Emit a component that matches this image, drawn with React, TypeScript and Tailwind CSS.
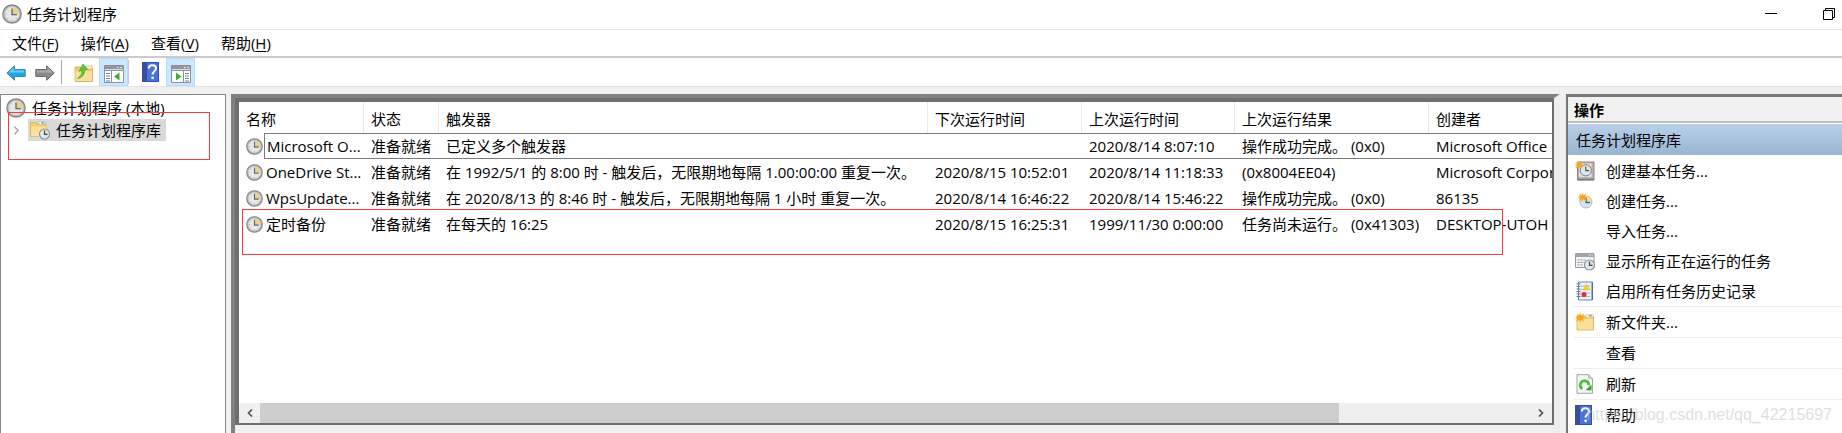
import cn from "clsx";
import type { ReactNode } from "react";

type IconProps = {
    className?: string;
};

type Task = {
    name: string;
    status: string;
    trigger: string;
    nextRun: string;
    lastRun: string;
    result: string;
    author: string;
};

type Action = {
    label: string;
    icon?: ReactNode;
    separated?: boolean;
};

function ClockIcon({ className }: IconProps) {
    return (
        <svg viewBox="0 0 20 20" className={cn("shrink-0", className)} aria-hidden="true">
            <circle cx="10" cy="10" r="9.2" fill="#b4b2b0" stroke="#858585" strokeWidth="1.2" />
            <circle cx="10" cy="10" r="7.2" fill="#e6e8ea" stroke="#d2d2d2" strokeWidth="0.8" />
            <path d="M10 10.5V3.200A6.800 6.800 0 0 1 16.800 10.500z" fill="#ecd08a" />
            <path d="M10 4.500v6.200h4.800" fill="none" stroke="#5c6673" strokeWidth="1.300" />
            <path
                d="M10 15.300v1.200M3.600 10h1.200M5.500 5.500l.8.8M5.500 14.500l.8-.8M14.500 14.500l-.8-.8"
                stroke="#9aa0a8"
                strokeWidth="0.8"
            />
        </svg>
    );
}

function SmallClock() {
    return (
        <g>
            <circle cx="14.5" cy="14" r="5" fill="#dce9f0" stroke="#84929c" strokeWidth="1.1" />
            <path d="M14.5 14V9.7A4.3 4.3 0 0 1 18.8 14z" fill="#f2dda0" />
            <path d="M14.5 10.6V14.4h3" fill="none" stroke="#37495a" strokeWidth="1.2" />
        </g>
    );
}

function Spark() {
    return (
        <path
            d="M6 0l1.2 3L10.6 1 9.4 4.6l3.2 1.2-3.2 1.3.9 3.5-3.3-1.8L5.6 12 4.4 8.8 1 10.4l1.5-3.5L0 5.4l3-.9L2 1.4l3 1.5z"
            fill="#f9a51c"
            stroke="#fbc253"
            strokeWidth="0.5"
        />
    );
}

function LibraryIcon({ className }: IconProps) {
    return (
        <svg viewBox="0 0 20 20" className={cn("shrink-0", className)} aria-hidden="true">
            <path d="M0.5 2.5h6l1.5 2h8v12H0.5z" fill="#f1cd74" stroke="#d5ac4e" strokeWidth="0.7" />
            <path d="M9 1.5h6.5v3H9z" fill="#fff" stroke="#c9b06f" strokeWidth="0.5" />
            <path d="M11 2.2h3.5v1.3H11z" fill="#3f9be8" />
            <path d="M1 6.5h15v9.7H1z" fill="#fbe09a" />
            <SmallClock />
        </svg>
    );
}

function UpFolderIcon({ className }: IconProps) {
    return (
        <svg viewBox="0 0 20 20" className={cn("shrink-0", className)} aria-hidden="true">
            <path d="M1 4h6l1.5 1.5H18.5v13H1z" fill="#f0cd79" stroke="#d0a94f" strokeWidth="0.8" />
            <path d="M12 3h6v3h-6z" fill="#fff4d2" stroke="#d0a94f" strokeWidth="0.6" />
            <path d="M1.5 8h16.6v10H1.5z" fill="#f9df9b" />
            <path
                d="M3.5 15.5C6.5 13.5 8 10.500 8 7.500L5 8.300 9 1l4.500 5.300-2.700.6c.2 4.500-2.800 7.900-7.300 8.600z"
                fill="#5cc93a"
                stroke="#3e9c27"
                strokeWidth="0.6"
            />
        </svg>
    );
}

function NewFolderIcon() {
    return (
        <svg viewBox="0 0 20 20" className="size-5" aria-hidden="true">
            <path d="M2 4h16.5v14H2z" fill="#f0cb74" stroke="#d0a94f" strokeWidth="0.8" />
            <path d="M11 2.5h7v3h-7z" fill="#fff" stroke="#c9b06f" strokeWidth="0.5" />
            <path d="M13.5 3.2H17v1.2h-3.5z" fill="#3f9be8" />
            <path d="M2.5 7h15.6v10.5H2.500z" fill="#fbdf99" />
            <g transform="translate(.5 1) scale(.8)">
                <Spark />
            </g>
        </svg>
    );
}

function ArrowIcon({ className, back }: IconProps & { back?: boolean }) {
    return (
        <svg viewBox="0 0 20 16" className={cn("shrink-0", className)} aria-hidden="true">
            {back ? (
                <>
                    <path
                        d="M.8 8L8.5.8v3.7h10.7v7H8.5v3.7z"
                        fill="#22a5e8"
                        stroke="#3c86b4"
                        strokeWidth="1"
                        strokeLinejoin="round"
                    />
                    <path d="M2.5 7.5L7.5 2.8v2.7h10.7v2z" fill="#6fcbf5" />
                </>
            ) : (
                <>
                    <path
                        d="M19.2 8L11.5.8v3.7H.8v7h10.7v3.7z"
                        fill="#8a8a8a"
                        stroke="#6c6c6c"
                        strokeWidth="1"
                        strokeLinejoin="round"
                    />
                    <path d="M17.5 7.5l-5-4.7v2.7H1.8v2z" fill="#a9a9a9" />
                </>
            )}
        </svg>
    );
}

function PaneIcon({ side }: { side: "left" | "right" }) {
    const isLeft = side === "left";

    return (
        <svg viewBox="0 0 20 18" className="h-[18px] w-5" aria-hidden="true">
            <path d="M.5.5h19v17H.5z" fill="#fff" stroke="#8b919b" />
            <path d="M1 1h18v5H1z" fill="#8f96a3" />
            <path d="M1 4.5h18" stroke="#d9dde3" />
            <path d="M13 2.5h1.5M16.500 2.500h1.500" stroke="#fff" strokeWidth="1.2" />
            <path d={isLeft ? "M7.5 6v11" : "M12.5 6v11"} stroke="#8b919b" />
            <path
                d={isLeft ? "M2 8.5h4M2 11h4M2 13.5h4M2 16h4" : "M14 8.5h4M14 11h4M14 13.5h4M14 16h4"}
                stroke="#5d83b5"
                strokeWidth="1.1"
            />
            <path d={isLeft ? "M15.5 7.5v8L10 11.5z" : "M5 7.5v8l5.5-4z"} fill="#3fae2f" />
        </svg>
    );
}

function HelpIcon({ className }: IconProps) {
    return (
        <svg viewBox="0 0 17 20" className={cn("shrink-0", className)} aria-hidden="true">
            <path d="M0 0h17v20H0z" fill="#2e50b5" />
            <path d="M0 0h4v20H0z" fill="#3d4f93" />
            <path d="M5 1h11v18H5z" fill="#4a72dc" />
            <path
                d="M6.8 6.5C6.8 4.2 8.3 3.2 10.3 3.2c2.200 0 3.700 1.200 3.700 3.100 0 2.700-3.400 3-3.400 6.200"
                fill="none"
                stroke="#fff"
                strokeWidth="2"
            />
            <circle cx="10.6" cy="15.8" r="1.4" fill="#fff" />
        </svg>
    );
}

function BasicTaskIcon() {
    return (
        <svg viewBox="0 0 20 20" className="size-5" aria-hidden="true">
            <path d="M2.5 1h16.5v18H2.5z" fill="#b9b4b4" stroke="#8b7774" strokeWidth="0.9" />
            <path d="M4 2.5h12.500v13.500H4z" fill="#e4e2e0" />
            <path d="M2.5 18.5h16.5" stroke="#777" strokeWidth="1.5" />
            <circle cx="10.8" cy="9.3" r="5.6" fill="#dbe8f0" stroke="#6e7f8b" />
            <path d="M10.8 9.3V4.6a4.7 4.7 0 0 1 4.7 4.7z" fill="#f7e6b5" />
            <path d="M10.8 5.5v4.2h3.5" fill="none" stroke="#35546f" strokeWidth="1.2" />
            <g transform="scale(.68)">
                <Spark />
            </g>
        </svg>
    );
}

function CreateTaskIcon() {
    return (
        <svg viewBox="0 0 20 20" className="size-5" aria-hidden="true">
            <circle cx="11" cy="11" r="6" fill="#d7e6ef" stroke="#aebbc4" />
            <path d="M11 11V5.5a5.5 5.5 0 0 1 5.5 5.5z" fill="#f6dc9b" />
            <path d="M11 7v4.5h4" fill="none" stroke="#45617c" strokeWidth="1.3" />
            <g transform="translate(3 2) scale(.75)">
                <Spark />
            </g>
        </svg>
    );
}

function RunningTasksIcon() {
    return (
        <svg viewBox="0 0 20 20" className="size-5" aria-hidden="true">
            <path d="M.5 2.5h18.5v14H.5z" fill="#f3f4f5" stroke="#969ba1" />
            <path d="M.5 2.5h18.5v3.5H.5z" fill="#9ba4b0" />
            <path d="M14 4h1.2M16.5 4h1.2" stroke="#fff" />
            <path d="M2.5 9h9M2.5 11.5h7M2.5 14h6" stroke="#8b8f95" strokeDasharray="2 1" />
            <SmallClock />
        </svg>
    );
}

function HistoryIcon() {
    return (
        <svg viewBox="0 0 20 20" className="size-5" aria-hidden="true">
            <path d="M3.5 1h14v18h-14z" fill="#eef4fb" stroke="#6885ab" />
            <path d="M16.5 1.5h1.5v17h-1.5z" fill="#3d6fae" />
            <path d="M6 5h9M6 8.5h9M6 12h9M6 15.5h9" stroke="#9db6d3" />
            <path d="M1.5 3h4M1.5 5.5h4M1.5 8h4M1.5 10.5h4M1.5 13h4M1.5 15.5h4" stroke="#70757b" />
            <path d="M11.5 3l3.8 6H7.9z" fill="#f8cf2d" stroke="#e0b320" strokeWidth="0.4" />
            <circle cx="9" cy="13.5" r="2.5" fill="#d9333a" />
        </svg>
    );
}

function RefreshIcon() {
    return (
        <svg viewBox="0 0 20 20" className="size-5" aria-hidden="true">
            <path d="M2 .7h11.5l4 4v14.6H2z" fill="#f4f5f5" stroke="#a3a7aa" />
            <path d="M13.5.7v4h4z" fill="#d5d8da" stroke="#a3a7aa" strokeWidth="0.6" />
            <path d="M7.3 14.8a4.3 4.3 0 1 1 6.5-3.6" fill="none" stroke="#4cbc3c" strokeWidth="2.6" />
            <path d="M16.5 10.5v5.7h-6z" fill="#36a42a" />
        </svg>
    );
}

const menus = [
    { label: "文件", hotkey: "F" },
    { label: "操作", hotkey: "A" },
    { label: "查看", hotkey: "V" },
    { label: "帮助", hotkey: "H" },
];

const columns = [
    { title: "名称", width: "w-[125px]" },
    { title: "状态", width: "w-[75px]" },
    { title: "触发器", width: "w-[489px]" },
    { title: "下次运行时间", width: "w-[154px]" },
    { title: "上次运行时间", width: "w-[153px]" },
    { title: "上次运行结果", width: "w-[194px]" },
    { title: "创建者", width: "w-auto" },
];

const tasks: Task[] = [
    {
        name: "Microsoft O...",
        status: "准备就绪",
        trigger: "已定义多个触发器",
        nextRun: "",
        lastRun: "2020/8/14 8:07:10",
        result: "操作成功完成。 (0x0)",
        author: "Microsoft Office",
    },
    {
        name: "OneDrive St...",
        status: "准备就绪",
        trigger: "在 1992/5/1 的 8:00 时 - 触发后，无限期地每隔 1.00:00:00 重复一次。",
        nextRun: "2020/8/15 10:52:01",
        lastRun: "2020/8/14 11:18:33",
        result: "(0x8004EE04)",
        author: "Microsoft Corpora",
    },
    {
        name: "WpsUpdate...",
        status: "准备就绪",
        trigger: "在 2020/8/13 的 8:46 时 - 触发后，无限期地每隔 1 小时 重复一次。",
        nextRun: "2020/8/14 16:46:22",
        lastRun: "2020/8/14 15:46:22",
        result: "操作成功完成。 (0x0)",
        author: "86135",
    },
    {
        name: "定时备份",
        status: "准备就绪",
        trigger: "在每天的 16:25",
        nextRun: "2020/8/15 16:25:31",
        lastRun: "1999/11/30 0:00:00",
        result: "任务尚未运行。 (0x41303)",
        author: "DESKTOP-UTOH",
    },
];

const actions: Action[] = [
    { label: "创建基本任务...", icon: <BasicTaskIcon /> },
    { label: "创建任务...", icon: <CreateTaskIcon /> },
    { label: "导入任务..." },
    { label: "显示所有正在运行的任务", icon: <RunningTasksIcon /> },
    { label: "启用所有任务历史记录", icon: <HistoryIcon /> },
    { label: "新文件夹...", icon: <NewFolderIcon />, separated: true },
    { label: "查看", separated: true },
    { label: "刷新", icon: <RefreshIcon />, separated: true },
    { label: "帮助", icon: <HelpIcon className="h-5 w-[17px]" />, separated: true },
];

function TitleBar() {
    return (
        <header className="flex h-[30px] shrink-0 items-center border-b border-[#e8e8e8] bg-white pr-[7px] pb-px pl-[2px]">
            <ClockIcon className="size-5" />
            <h1 className="ml-[5px] flex-1">任务计划程序</h1>
            <div className="flex gap-[46px]">
                <button type="button" aria-label="最小化">
                    <svg viewBox="0 0 12 12" className="size-3">
                        <path d="M0 5.5h12" stroke="#000" />
                    </svg>
                </button>
                <button type="button" aria-label="还原">
                    <svg viewBox="0 0 12 12" className="size-3" fill="none" stroke="#000">
                        <path d="M.5 2.5h9v9h-9zM2.5 2.5v-2h9v9h-2" />
                    </svg>
                </button>
            </div>
        </header>
    );
}

function MenuBar() {
    return (
        <nav className="flex h-7 shrink-0 items-center gap-[22px] border-b-2 border-[#cbcbce] bg-white px-3">
            {menus.map((menu) => (
                <button key={menu.hotkey} type="button">
                    {menu.label}(<u className="underline-offset-2">{menu.hotkey}</u>)
                </button>
            ))}
        </nav>
    );
}

function Toolbar() {
    const activeStyle = "flex h-7 w-[29px] items-center justify-center border border-[#b5dcfa] bg-[#cce8ff] pt-1";

    return (
        <div className="flex h-[29px] shrink-0 items-center border-b border-[#e3e3e3] bg-white pl-[6px]">
            <button type="button" aria-label="后退" className="pt-[2px]">
                <ArrowIcon back className="h-4 w-5" />
            </button>
            <button type="button" aria-label="前进" className="ml-[9px] pt-[2px]">
                <ArrowIcon className="h-4 w-5" />
            </button>
            <span className="mr-3 ml-[6px] h-6 w-px bg-[#a5a5a5]" />
            <button type="button" aria-label="向上" className="pt-[2px]">
                <UpFolderIcon className="size-5" />
            </button>
            <button type="button" aria-label="显示/隐藏控制台树" className={cn(activeStyle, "ml-[5px]")}>
                <PaneIcon side="left" />
            </button>
            <span className="mr-[13px] h-6 w-px bg-[#c8c8c8]" />
            <button type="button" aria-label="帮助">
                <HelpIcon className="h-5 w-[17px]" />
            </button>
            <button type="button" aria-label="显示/隐藏操作窗格" className={cn(activeStyle, "ml-[7px]")}>
                <PaneIcon side="right" />
            </button>
        </div>
    );
}

function TreePane() {
    return (
        <aside className="relative w-[226px] shrink-0 border border-b-0 border-[#82878f] bg-white pt-[2px]">
            <button type="button" className="flex h-[22px] items-center gap-[6px] pl-[5px]">
                <ClockIcon className="size-5" />
                任务计划程序 (本地)
            </button>
            <div className="flex h-[22px] items-center pl-3">
                <button type="button" aria-label="展开" className="mr-2 w-[7px]">
                    <svg viewBox="0 0 7 9" className="h-[9px] w-[7px]" fill="none" stroke="#a0a0a0">
                        <path d="M1.5.8l3.7 3.7-3.7 3.7" strokeWidth="1.3" />
                    </svg>
                </button>
                <button type="button" className="flex h-[22px] items-center gap-[6px] bg-[#d9d9d9] pr-[5px] pl-[2px]">
                    <LibraryIcon className="size-5" />
                    任务计划程序库
                </button>
            </div>
            <div className="pointer-events-none absolute top-[17px] left-[7px] h-12 w-[202px] border border-[#f53b3b]" />
        </aside>
    );
}

function TaskTable() {
    return (
        <table className="w-full table-fixed border-separate border-spacing-0 text-left">
            <thead>
                <tr className="h-[31px]">
                    {columns.map((column) => (
                        <th
                            key={column.title}
                            className={cn(
                                "border-r border-[#e8e8e8] p-0 pt-[2px] pl-[7px] font-normal last:border-r-0",
                                column.width,
                            )}
                        >
                            {column.title}
                        </th>
                    ))}
                </tr>
            </thead>
            <tbody>
                {tasks.map((task, index) => {
                    const isFocused = index === 0;
                    const cellStyle = cn("h-[26px] overflow-hidden p-0 pl-[7px] whitespace-nowrap", {
                        "border-y border-[#7a7a7a]": isFocused,
                    });

                    return (
                        <tr key={task.name}>
                            <td className="h-[26px] p-0 pl-[7px] whitespace-nowrap">
                                <div className="flex h-[26px] items-center gap-px">
                                    <ClockIcon className="size-[17px]" />
                                    <span
                                        className={cn("flex h-full min-w-0 flex-1 items-center pl-[2px]", {
                                            "border border-r-0 border-[#7a7a7a]": isFocused,
                                        })}
                                    >
                                        {task.name}
                                    </span>
                                </div>
                            </td>
                            <td className={cellStyle}>{task.status}</td>
                            <td className={cellStyle}>{task.trigger}</td>
                            <td className={cellStyle}>{task.nextRun}</td>
                            <td className={cellStyle}>{task.lastRun}</td>
                            <td className={cellStyle}>{task.result}</td>
                            <td className={cellStyle}>{task.author}</td>
                        </tr>
                    );
                })}
            </tbody>
        </table>
    );
}

function ScrollBar() {
    return (
        <div className="flex h-5 shrink-0 bg-[#efefef]">
            <button type="button" aria-label="向左滚动" className="flex w-[21px] items-center justify-center">
                <svg viewBox="0 0 6 8" className="h-2 w-[6px]" fill="none" stroke="#555" strokeWidth="1.7">
                    <path d="M5 .5L1.5 4 5 7.5" />
                </svg>
            </button>
            <div className="flex-1">
                <div className="h-full w-[85%] bg-[#cdcdcd]" />
            </div>
            <button type="button" aria-label="向右滚动" className="flex w-[23px] items-center justify-center">
                <svg viewBox="0 0 6 8" className="h-2 w-[6px]" fill="none" stroke="#555" strokeWidth="1.7">
                    <path d="M1 .5L4.5 4 1 7.5" />
                </svg>
            </button>
        </div>
    );
}

function TaskPane() {
    return (
        <main className="ml-[5px] flex min-w-0 flex-1 flex-col border-t-4 border-r-[6px] border-l-4 border-t-[#808080] border-r-[#ededed] border-l-[#808080] pb-2">
            <div className="relative flex min-h-0 flex-1 flex-col border-t-4 border-r-2 border-b-2 border-l-4 border-[#6e6e6e] bg-white">
                <div className="min-h-0 flex-1 overflow-hidden">
                    <TaskTable />
                </div>
                <ScrollBar />
                <div className="pointer-events-none absolute top-[107px] right-[49px] left-[3px] h-[46px] border border-[#f53b3b]" />
            </div>
        </main>
    );
}

function ActionsPane() {
    return (
        <aside className="ml-[6px] flex w-[276px] shrink-0 flex-col border-t-[3px] border-l-2 border-[#777] bg-white">
            <h2 className="flex h-[26px] shrink-0 items-center border-b-2 border-[#bdbdbd] bg-[#f0f0f0] pt-px pl-[6px] font-bold">
                操作
            </h2>
            <h3 className="mt-px flex h-[31px] shrink-0 items-center bg-linear-to-b from-[#b9d1ea] to-[#99b4d1] pl-2">
                任务计划程序库
            </h3>
            <ul className="pt-px pl-[6px]">
                {actions.map((action) => (
                    <li key={action.label} className={cn({ "border-t border-[#ececec]": action.separated })}>
                        <button type="button" className="flex h-[30px] w-full items-center">
                            <span className="flex w-8 shrink-0 pl-px">{action.icon}</span>
                            {action.label}
                        </button>
                    </li>
                ))}
            </ul>
        </aside>
    );
}

function App() {
    return (
        <div className="relative flex h-screen flex-col overflow-hidden bg-[#f0f0f0] font-['Open_Sans','Noto_Sans_CJK_SC',sans-serif] text-[15px] leading-5 whitespace-nowrap text-black">
            <TitleBar />
            <MenuBar />
            <Toolbar />
            <div className="flex min-h-0 flex-1 pt-[7px]">
                <TreePane />
                <TaskPane />
                <ActionsPane />
            </div>
            <div className="pointer-events-none absolute right-[10px] bottom-[6px] font-['Liberation_Sans',sans-serif] text-base text-[#c8c8c8]/60">
                https://blog.csdn.net/qq_42215697
            </div>
        </div>
    );
}

export default App;
